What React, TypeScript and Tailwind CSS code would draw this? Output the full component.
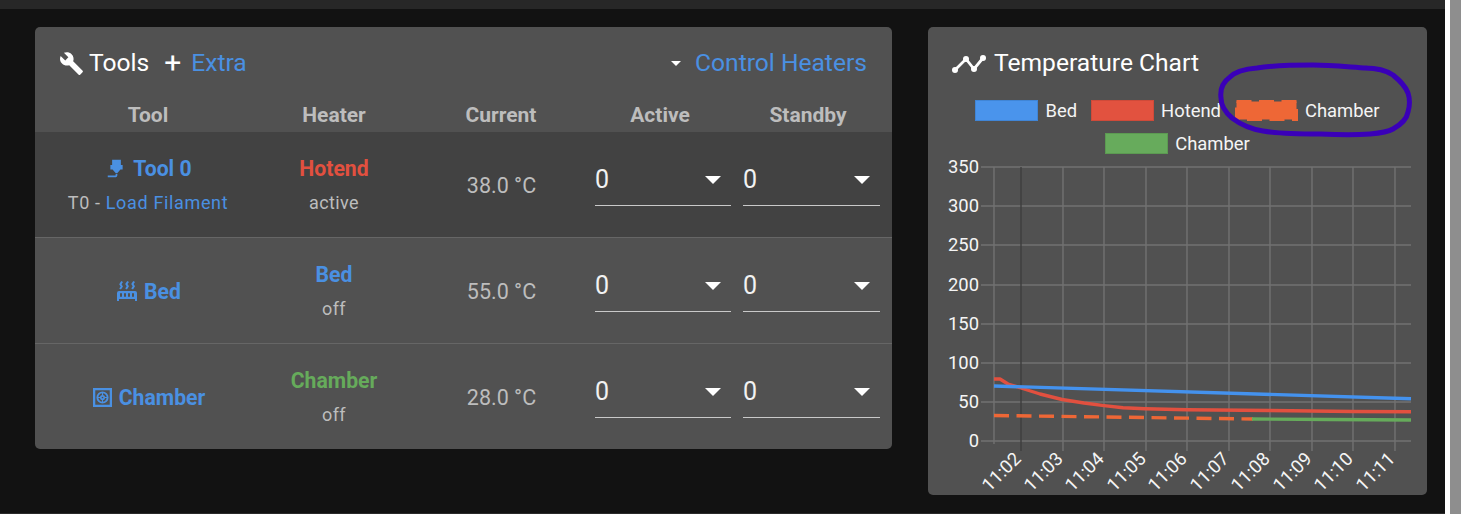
import React from "react";

const blue = "text-[#4a90e2]";

const Icon = ({ d, className }: { d: string; className: string }) => (
  <svg viewBox="0 0 24 24" className={className} fill="currentColor" aria-hidden="true">
    <path d={d} />
  </svg>
);

const wrench =
  "M22.7,19L13.6,9.9C14.5,7.6 14,4.9 12.1,3C10.1,1 7.1,0.6 4.7,1.7L9,6L6,9L1.6,4.7C0.4,7.1 0.9,10.1 2.9,12.1C4.8,14 7.5,14.5 9.8,13.6L18.9,22.7C19.3,23.1 19.9,23.1 20.3,22.7L22.6,20.4C23.1,20 23.1,19.3 22.7,19Z";
const nozzle =
  "M7,2H17V8H19V13H16.5L13,17H11L7.5,13H5V8H7V2M10,22H2V20H10A1,1 0 0,0 11,19V18H13V19A3,3 0 0,1 10,22Z";
const radiator =
  "M7.95,3L6.53,5.19L7.95,7.4H7.94L5.95,10.5L4.22,9.6L5.64,7.39L4.22,5.19L6.22,2.09L7.95,3M13.95,2.89L12.53,5.1L13.95,7.3L13.94,7.31L11.95,10.4L10.22,9.5L11.64,7.3L10.22,5.1L12.22,2L13.95,2.89M20,2.89L18.56,5.1L20,7.3V7.31L18,10.4L16.25,9.5L17.67,7.3L16.25,5.1L18.25,2L20,2.89M2,22V14A2,2 0 0,1 4,12H20A2,2 0 0,1 22,14V22H20V20H4V22H2M6,14A1,1 0 0,0 5,15V17A1,1 0 0,0 6,18A1,1 0 0,0 7,17V15A1,1 0 0,0 6,14M10,14A1,1 0 0,0 9,15V17A1,1 0 0,0 10,18A1,1 0 0,0 11,17V15A1,1 0 0,0 10,14M14,14A1,1 0 0,0 13,15V17A1,1 0 0,0 14,18A1,1 0 0,0 15,17V15A1,1 0 0,0 14,14M18,14A1,1 0 0,0 17,15V17A1,1 0 0,0 18,18A1,1 0 0,0 19,17V15A1,1 0 0,0 18,14Z";

const ChamberIcon = () => (
  <svg viewBox="0 0 20 20" className="w-[19px] h-[19px] ml-[2px] mr-[7px] text-[#4a90e2]" fill="none" stroke="currentColor" aria-hidden="true">
    <rect x="1.2" y="1.2" width="17.6" height="17.6" strokeWidth="2.4" />
    <circle cx="10" cy="10" r="5.4" strokeWidth="2" />
    <circle cx="10" cy="10" r="1.8" strokeWidth="1.8" />
    <path d="M10 5V8M10 12V15M5 10H8M12 10H15" strokeWidth="1.2" />
  </svg>
);

const Caret = () => (
  <svg viewBox="0 0 16 8" className="w-[16px] h-[8px] text-white" fill="currentColor" aria-hidden="true">
    <path d="M0 0H16L8 8Z" />
  </svg>
);

const HeatSelect = ({ className }: { className: string }) => (
  <div className={`flex items-center justify-between h-[50px] mb-[8px] border-b border-[#c9c9c9] text-[25px] text-[#f2f2f2] pr-[10px] ${className}`}>
    <span>0</span>
    <Caret />
  </div>
);

const rows = [
  {
    tool: (
      <div className="flex flex-col items-center pt-[2px]">
        <div className={`flex items-center font-bold text-[21.2px] leading-[34px] ${blue}`}>
          <Icon d={nozzle} className="w-[21px] h-[21px] ml-[2px] mr-[6px]" />
          Tool 0
        </div>
        <div className="text-[18px] leading-[34px] tracking-[0.65px] text-[#bdbdbd]">
          T0 - <span className={blue}>Load Filament</span>
        </div>
      </div>
    ),
    heater: "Hotend",
    heaterColor: "text-[#e2503f]",
    state: "active",
    current: "38.0 °C",
    height: "h-[105px]",
    bg: "bg-[#424242]",
  },
  {
    tool: (
      <div className={`flex items-center font-bold text-[21.2px] pt-[2px] ${blue}`}>
        <Icon d={radiator} className="w-[24px] h-[24px] mr-[5px]" />
        Bed
      </div>
    ),
    heater: "Bed",
    heaterColor: "text-[#4a90e2]",
    state: "off",
    current: "55.0 °C",
    height: "h-[106px] border-t border-[#666666]",
    bg: "",
  },
  {
    tool: (
      <div className={`flex items-center font-bold text-[21.2px] pt-[2px] ${blue}`}>
        <ChamberIcon />
        Chamber
      </div>
    ),
    heater: "Chamber",
    heaterColor: "text-[#66ab5b]",
    state: "off",
    current: "28.0 °C",
    height: "h-[106px] border-t border-[#666666]",
    bg: "",
  },
];

const gridCols = "grid grid-cols-[226px_146px_188px_148px_149px] items-center";

const ToolsCard = () => (
  <section className="w-[857px] h-[422px] bg-[#515151] rounded-[5px] overflow-hidden flex flex-col">
    <header className="h-[73px] flex items-center justify-between pl-[24px] pr-[25px] text-[24.6px] text-white">
      <div className="flex items-center">
        <Icon d={wrench} className="w-[25px] h-[25px] mr-[5px]" />
        <span>Tools</span>
        <span className="ml-[15px] mr-[10px] text-[30px] leading-none">+</span>
        <span className={blue}>Extra</span>
      </div>
      <div className="flex items-center">
        <svg viewBox="0 0 10 5" className="w-[10px] h-[5px] mr-[14px] text-white" fill="currentColor" aria-hidden="true">
          <path d="M0 0H10L5 5Z" />
        </svg>
        <span className={blue}>Control Heaters</span>
      </div>
    </header>
    <div className={`${gridCols} h-[32px] font-bold text-[21px] text-[#bdbdbd] text-center`}>
      <div>Tool</div>
      <div>Heater</div>
      <div>Current</div>
      <div className="pr-[18px]">Active</div>
      <div className="pr-[19px]">Standby</div>
    </div>
    {rows.map((row) => (
      <div key={row.heater} className={`${gridCols} ${row.height} ${row.bg}`}>
        <div className="flex justify-center">{row.tool}</div>
        <div className="text-center pt-[2px]">
          <div className={`font-bold text-[21.2px] leading-[34px] ${row.heaterColor}`}>{row.heater}</div>
          <div className="text-[18px] leading-[34px] tracking-[0.4px] text-[#bdbdbd]">{row.state}</div>
        </div>
        <div className="text-center text-[21.5px] pt-[4px] pl-[1px] text-[#bdbdbd]">{row.current}</div>
        <HeatSelect className="w-[136px]" />
        <HeatSelect className="w-[137px]" />
      </div>
    ))}
  </section>
);

const LegendItem = ({ label, children }: { label: string; children: React.ReactNode }) => (
  <div className="flex items-center h-[21px]">
    {children}
    <span className="ml-[7px] text-[18.4px] leading-[21px] text-[#f5f5f5]">{label}</span>
  </div>
);

const gridX = [994, 1063, 1104, 1146, 1187, 1229, 1270, 1312, 1353, 1395];
const gridY = [167, 206, 245, 285, 324, 363, 402, 441];
const yLabels = [350, 300, 250, 200, 150, 100, 50, 0];
const times = ["11:02", "11:03", "11:04", "11:05", "11:06", "11:07", "11:08", "11:09", "11:10", "11:11"];
const timeX = [1021, 1063, 1104, 1146, 1187, 1229, 1270, 1312, 1353, 1395];

const Chart = () => (
  <svg viewBox="928 155 499 340" className="w-[499px] h-[340px] block" style={{ fontFamily: "Roboto, sans-serif" }}>
    {gridY.map((y) => (
      <line key={y} x1="981" x2="1411" y1={y} y2={y} stroke="#727272" strokeWidth="1.4" />
    ))}
    {gridX.map((x) => (
      <line key={x} x1={x} x2={x} y1="167" y2={x === 994 ? 444 : 451} stroke="#727272" strokeWidth="1.4" />
    ))}
    <line x1="1021" x2="1021" y1="167" y2="451" stroke="#3e3e3e" strokeWidth="1.4" />
    {gridY.map((y, i) => (
      <text key={y} x="979" y={y + 6} textAnchor="end" fontSize="18.4" fill="#f5f5f5">
        {yLabels[i]}
      </text>
    ))}
    {times.map((t, i) => (
      <text key={t} transform={`translate(${timeX[i] + 1} 460) rotate(-45)`} textAnchor="end" fontSize="18.4" fill="#f5f5f5">
        {t}
      </text>
    ))}
    <path d="M994 415.5L1253 419" fill="none" stroke="#ee6736" strokeWidth="3.4" strokeDasharray="15 7.5" />
    <path d="M1252 419L1330 419.5L1411 420" fill="none" stroke="#66ab5b" strokeWidth="3.4" />
    <path
      d="M994 379L1000 379L1008 384L1021 388L1040 394L1062 399.5L1084 403L1104 405.6L1123 407.7L1145 408.7L1187 409.7L1270 410.5L1353 411.5L1411 411.8"
      fill="none"
      stroke="#e2503f"
      strokeWidth="3.4"
      strokeLinejoin="round"
    />
    <path d="M994 386L1411 398.7" fill="none" stroke="#4492ee" strokeWidth="3.4" />
  </svg>
);

const ChartCard = () => (
  <section className="relative w-[499px] h-[468px] bg-[#515151] rounded-[5px] overflow-hidden flex flex-col">
    <header className="h-[73px] flex items-center pl-[24px] text-[24.6px] text-white">
      <svg viewBox="0 0 34 22" className="w-[34px] h-[22px] mr-[8px]" fill="none" aria-hidden="true">
        <path d="M3 17L14 6L22 16L31 5" stroke="#ffffff" strokeWidth="2.8" />
        <circle cx="3" cy="17" r="3" fill="#ffffff" />
        <circle cx="14" cy="6" r="3" fill="#ffffff" />
        <circle cx="22" cy="16" r="3" fill="#ffffff" />
        <circle cx="31" cy="5" r="3" fill="#ffffff" />
      </svg>
      Temperature Chart
    </header>
    <div className="flex flex-wrap justify-center content-start gap-x-[14px] gap-y-[12px] h-[55px] px-[40px]">
      <LegendItem label="Bed">
        <span className="w-[63px] h-[21px] bg-[#4a94ec] border border-[#4085d6]" />
      </LegendItem>
      <LegendItem label="Hotend">
        <span className="w-[63px] h-[21px] bg-[#e2523f] border border-[#cf4a39]" />
      </LegendItem>
      <LegendItem label="Chamber">
        <svg viewBox="0 0 63 21" className="w-[63px] h-[21px]" aria-hidden="true">
          <rect x="1.5" y="1.5" width="60" height="18" fill="#ee6736" stroke="#ee6736" strokeWidth="3" strokeDasharray="15 7.5" />
        </svg>
      </LegendItem>
      <LegendItem label="Chamber">
        <span className="w-[63px] h-[21px] bg-[#67ab5c] border border-[#5c9a52]" />
      </LegendItem>
    </div>
    <Chart />
    {/* hand drawn ink ring on top of the legend */}
    <svg viewBox="928 27 499 468" className="absolute left-0 top-0 w-[499px] h-[468px] pointer-events-none" fill="none" aria-hidden="true">
      <path
        d="M1367 68C1350 67 1330 65 1313 65C1290 65 1270 66 1257 68C1245 69 1235 72 1230 77C1223 82 1220 90 1221 98C1221 106 1225 112 1232 118C1240 124 1250 129 1263 131C1280 134 1300 134 1320 134C1340 135 1358 135 1370 134C1382 133 1388 132 1393 129C1402 124 1407 118 1408 112C1410 105 1410 99 1408 93C1405 85 1399 80 1393 75C1387 71 1380 68 1365 68"
        stroke="#3a00b8"
        strokeWidth="5"
        strokeLinecap="round"
      />
    </svg>
  </section>
);

export default function App() {
  return (
    <div className="flex h-[514px] w-[1461px] overflow-hidden bg-white font-['Roboto',sans-serif]">
      <main className="w-[1445px] flex flex-col bg-[#121212] border-b border-[#2a2a2a]">
        <div className="h-[9px] bg-[#272727]" />
        <div className="flex items-start pt-[18px] pl-[35px] gap-[36px]">
          <ToolsCard />
          <ChartCard />
        </div>
      </main>
      <div className="ml-[5px] flex-1 bg-[#8e8e8e]" />
    </div>
  );
}
